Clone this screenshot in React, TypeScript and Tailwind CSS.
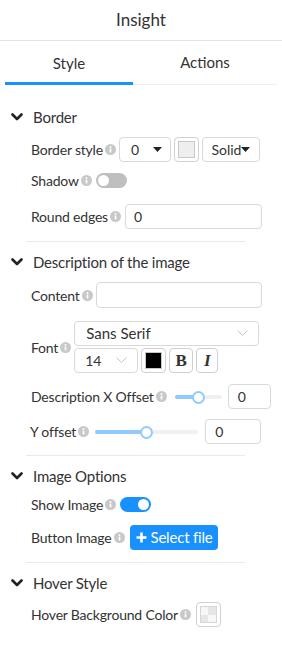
import React from 'react';

const font = { fontFamily: 'Lato, "Noto Sans", sans-serif' };

function Info() {
  return (
    <svg width="11" height="11" viewBox="0 0 12 12" className="shrink-0">
      <circle cx="6" cy="6" r="6" fill="#c8c8c8" />
      <rect x="5.1" y="5" width="1.8" height="4.2" fill="#fff" />
      <circle cx="6" cy="3.3" r="1" fill="#fff" />
    </svg>
  );
}

function Chevron() {
  return (
    <svg width="12" height="8" viewBox="0 0 12 8" className="shrink-0">
      <path d="M1.5 1.5 L6 6 L10.5 1.5" fill="none" stroke="#222" strokeWidth="2.6" strokeLinecap="round" strokeLinejoin="round" />
    </svg>
  );
}

function Caret() {
  return (
    <svg width="9" height="5" viewBox="0 0 9 5">
      <path d="M0 0 L9 0 L4.5 5 Z" fill="#222" />
    </svg>
  );
}

function ThinChevron() {
  return (
    <svg width="11" height="7" viewBox="0 0 11 7">
      <path d="M0.5 0.5 L5.5 5.5 L10.5 0.5" fill="none" stroke="#c4c4c4" strokeWidth="1" />
    </svg>
  );
}

function Swatch({ inner }: { inner: string }) {
  return (
    <div className="w-[25px] h-[25px] border border-[#d0d0d0] rounded-[4px] p-[3px] shrink-0">
      <div className={`w-full h-full border border-[#c8c8c8] ${inner}`} />
    </div>
  );
}

function Header({ title, className }: { title: string; className: string }) {
  return (
    <div className={`flex items-center h-[20px] pl-[11px] gap-[10px] ${className}`}>
      <Chevron />
      <span className="text-[15px] text-[#333] tracking-[-0.2px]">{title}</span>
    </div>
  );
}

function Label({ text }: { text: string }) {
  return (
    <span className="flex items-center gap-[2px] text-[14px] text-[#333] tracking-[-0.2px] shrink-0">
      {text}
      <Info />
    </span>
  );
}

function Toggle({ on }: { on: boolean }) {
  return (
    <div
      className={`w-[31px] h-[15px] rounded-full flex items-center px-[2px] ${
        on ? 'bg-[#1890ff] justify-end' : 'bg-[#bfbfbf] justify-start'
      }`}
    >
      <div className="w-[11px] h-[11px] rounded-full bg-white" />
    </div>
  );
}

function Slider({ width, fill }: { width: number; fill: number }) {
  return (
    <div className="relative h-[14px] shrink-0" style={{ width }}>
      <div className="absolute left-0 right-0 top-[5px] h-[4px] rounded-full bg-[#f0f0f0]" />
      <div className="absolute left-0 top-[5px] h-[4px] rounded-full bg-[#91caff]" style={{ width: fill }} />
      <div
        className="absolute top-[1px] w-[13px] h-[13px] rounded-full bg-white border-2 border-[#91caff]"
        style={{ left: fill - 6 }}
      />
    </div>
  );
}

function Divider({ className }: { className: string }) {
  return <div className={`ml-[26px] w-[219px] h-px bg-[#eaeaea] ${className}`} />;
}

export default function App() {
  return (
    <div className="w-[282px] h-[648px] bg-white text-[#333]" style={font}>
      <div className="h-[41px] flex items-center justify-center text-[17px] text-[#333] border-b border-[#e3e3e3]">
        Insight
      </div>
      <div className="mx-[5px] flex border-b border-[#eeeeee] h-[44px]">
        <div className="w-[128px] flex items-center justify-center text-[15px] border-b-[3px] border-[#1890ff] mb-[-1px] pt-[3px]">
          Style
        </div>
        <div className="flex-1 flex items-center justify-center text-[15px]">Actions</div>
      </div>

      <Header title="Border" className="mt-[22px]" />
      <div className="flex items-center pl-[31px] mt-[10px] h-[25px]">
        <Label text="Border style" />
        <div className="ml-[3px] w-[52px] h-[25px] border border-[#d9d9d9] rounded-[4px] flex items-center justify-between pl-[11px] pr-[8px] text-[14px]">
          <span>0</span>
          <Caret />
        </div>
        <div className="ml-[3px]">
          <Swatch inner="bg-[#eeeeee]" />
        </div>
        <div className="ml-[3px] w-[58px] h-[25px] border border-[#d9d9d9] rounded-[4px] flex items-center justify-center text-[14px]">
          <span>Solid</span>
          <Caret />
        </div>
      </div>
      <div className="flex items-center pl-[31px] mt-[8px] h-[20px] gap-[4px]">
        <Label text="Shadow" />
        <Toggle on={false} />
      </div>
      <div className="flex items-center pl-[31px] mt-[14px] h-[25px]">
        <Label text="Round edges" />
        <div className="ml-[4px] w-[137px] h-[25px] border border-[#d9d9d9] rounded-[4px] flex items-center pl-[8px] text-[14px]">
          0
        </div>
      </div>
      <Divider className="mt-[12px]" />

      <Header title="Description of the image" className="mt-[10px]" />
      <div className="flex items-center pl-[31px] mt-[10px] h-[26px]">
        <Label text="Content" />
        <div className="ml-[3px] w-[166px] h-[26px] border border-[#d9d9d9] rounded-[4px]" />
      </div>
      <div className="flex items-center pl-[31px] mt-[13px]">
        <Label text="Font" />
        <div className="ml-[3px] flex flex-col gap-[2px]">
          <div className="w-[185px] h-[25px] border border-[#d9d9d9] rounded-[4px] flex items-center justify-between pl-[11px] pr-[10px] text-[15px]">
            <span>Sans Serif</span>
            <ThinChevron />
          </div>
          <div className="flex items-center gap-[3px]">
            <div className="w-[64px] h-[25px] border border-[#d9d9d9] rounded-[4px] flex items-center justify-between pl-[10px] pr-[10px] text-[14px]">
              <span>14</span>
              <ThinChevron />
            </div>
            <Swatch inner="bg-black" />
            <div
              className="w-[24px] h-[25px] border border-[#d0d0d0] rounded-[4px] flex items-center justify-center text-[17px] font-bold"
              style={{ fontFamily: '"Liberation Serif", serif' }}
            >
              B
            </div>
            <div
              className="w-[22px] h-[25px] border border-[#d0d0d0] rounded-[4px] flex items-center justify-center text-[17px] italic font-bold"
              style={{ fontFamily: '"Liberation Serif", serif' }}
            >
              I
            </div>
          </div>
        </div>
      </div>
      <div className="flex items-center pl-[31px] mt-[11px] h-[25px]">
        <Label text="Description X Offset" />
        <div className="ml-[8px]">
          <Slider width={47} fill={23} />
        </div>
        <div className="ml-[6px] w-[43px] h-[25px] border border-[#d9d9d9] rounded-[4px] flex items-center pl-[9px] text-[14px]">
          0
        </div>
      </div>
      <div className="flex items-center pl-[30px] mt-[10px] h-[25px]">
        <Label text="Y offset" />
        <div className="ml-[6px]">
          <Slider width={103} fill={51} />
        </div>
        <div className="ml-[7px] w-[56px] h-[25px] border border-[#d9d9d9] rounded-[4px] flex items-center pl-[9px] text-[14px]">
          0
        </div>
      </div>
      <Divider className="mt-[11px]" />

      <Header title="Image Options" className="mt-[10px]" />
      <div className="flex items-center pl-[31px] mt-[8px] h-[20px] gap-[4px]">
        <Label text="Show Image" />
        <Toggle on={true} />
      </div>
      <div className="flex items-center pl-[31px] mt-[11px] h-[25px]">
        <Label text="Button Image" />
        <div className="ml-[5px] h-[25px] px-[6px] rounded-[4px] bg-[#1890ff] text-white flex items-center gap-[4px] text-[15px] tracking-[-0.2px]">
          <svg width="11" height="11" viewBox="0 0 11 11">
            <path d="M5.5 0.5 V10.5 M0.5 5.5 H10.5" stroke="#fff" strokeWidth="2.6" />
          </svg>
          <span>Select file</span>
        </div>
      </div>
      <Divider className="mt-[12px]" />

      <Header title="Hover Style" className="mt-[10px]" />
      <div className="flex items-center pl-[31px] mt-[9px] h-[25px]">
        <Label text="Hover Background Color" />
        <div className="ml-[5px]">
          <div className="w-[25px] h-[25px] border border-[#d0d0d0] rounded-[4px] p-[3px]">
            <div className="w-full h-full grid grid-cols-2 grid-rows-2 border border-[#d6d6d6]">
              <div className="bg-[#f7f7f7]" />
              <div className="bg-[#e6e6e6]" />
              <div className="bg-[#e6e6e6]" />
              <div className="bg-[#f7f7f7]" />
            </div>
          </div>
        </div>
      </div>
    </div>
  );
}
